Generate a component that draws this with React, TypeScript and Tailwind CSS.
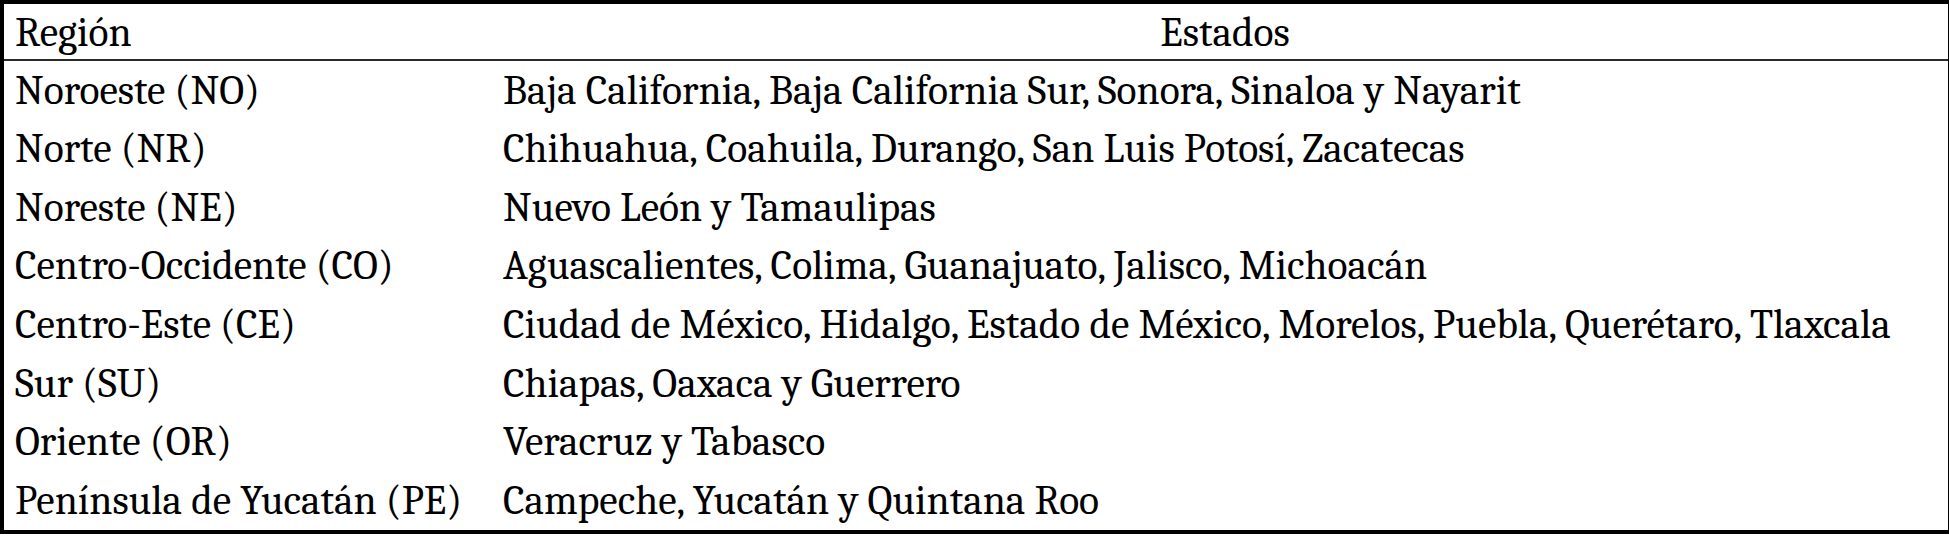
import React from 'react';

const rows: [string, string][] = [
  ['Noroeste (NO)', 'Baja California, Baja California Sur, Sonora, Sinaloa y Nayarit'],
  ['Norte (NR)', 'Chihuahua, Coahuila, Durango, San Luis Potosí, Zacatecas'],
  ['Noreste (NE)', 'Nuevo León y Tamaulipas'],
  ['Centro-Occidente (CO)', 'Aguascalientes, Colima, Guanajuato, Jalisco, Michoacán'],
  ['Centro-Este (CE)', 'Ciudad de México, Hidalgo, Estado de México, Morelos, Puebla, Querétaro, Tlaxcala'],
  ['Sur (SU)', 'Chiapas, Oaxaca y Guerrero'],
  ['Oriente (OR)', 'Veracruz y Tabasco'],
  ['Península de Yucatán (PE)', 'Campeche, Yucatán y Quintana Roo'],
];

const App: React.FC = () => {
  return (
    <div className="w-[1949px] h-[536px] bg-white text-black font-serif text-[41.5px]">
      <div className="leading-none flex flex-col border-t-4 border-b-4 border-l-4 border-r border-black">
        <div className="grid grid-cols-[489px_1fr] h-[57px] items-center border-b-2 border-[#2a2a2a]">
          <div className="pl-[11px] pt-[2px]">Región</div>
          <div className="text-center pl-[9px] pt-[2px]">Estados</div>
        </div>
        {rows.map(([region, estados]) => (
          <div key={region} className="grid grid-cols-[489px_1fr] h-[58.625px] items-center">
            <div className="pl-[11px] whitespace-nowrap">{region}</div>
            <div className="pl-[10px] whitespace-nowrap">{estados}</div>
          </div>
        ))}
      </div>
    </div>
  );
};

export default App;
